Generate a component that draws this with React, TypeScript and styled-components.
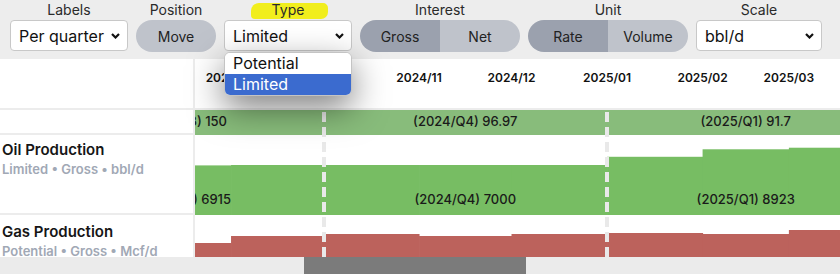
import React from 'react';
import styled, { createGlobalStyle, css } from 'styled-components';

const GlobalStyle = createGlobalStyle`
  html, body { margin: 0; padding: 0; background: #fff; }
  body { font-family: Inter, "Noto Sans", Arial, sans-serif; color: #1f1f1f; }
  * { box-sizing: border-box; }
`;

// time scale: px per day, Oct 1 2024 sits at this x inside a track
const DAY_PX = 3.082;
const ORIGIN_X = 128.5;
const TRACK_W = 645;

const dayIndex = (y: number, m: number) =>
  (Date.UTC(y, m, 1) - Date.UTC(2024, 9, 1)) / 86400000;
const xAt = (y: number, m: number) => ORIGIN_X + dayIndex(y, m) * DAY_PX;

const months = [
  [2024, 6], [2024, 7], [2024, 8], [2024, 9], [2024, 10],
  [2024, 11], [2025, 0], [2025, 1], [2025, 2],
];
const nextMonth = (y: number, m: number) => (m === 11 ? [y + 1, 0] : [y, m + 1]);

const quarters = [
  { from: [2024, 6], to: [2024, 9], name: '2024/Q3', band: '150', oil: '6915' },
  { from: [2024, 9], to: [2025, 0], name: '2024/Q4', band: '96.97', oil: '7000' },
  { from: [2025, 0], to: [2025, 3], name: '2025/Q1', band: '91.7', oil: '8923' },
];

const oilValues = [6800, 6945, 7000, 7000, 7000, 7000, 8150, 9200, 9420];
const gasValues = [0, 1400, 2100, 2300, 2100, 2300, 2400, 2300, 2700];

const Page = styled.div`
  width: 840px;
  height: 274px;
  overflow: hidden;
`;

const Toolbar = styled.div`
  display: flex;
  align-items: flex-start;
  gap: 8px;
  height: 59px;
  padding: 0 10px;
  background: #ededed;
  position: relative;
  z-index: 5;
`;

const Field = styled.div`
  display: flex;
  flex-direction: column;
  align-items: center;
  position: relative;
`;

const FieldLabel = styled.span<{ $marked?: boolean }>`
  position: relative;
  z-index: 0;
  height: 20px;
  font-size: 14px;
  line-height: 20px;
  color: #2a2a2a;
  ${p =>
    p.$marked &&
    css`
      &::before {
        content: '';
        position: absolute;
        left: -21px;
        right: -24px;
        top: 3px;
        bottom: 1px;
        background: #f1ee1d;
        border-radius: 8px 5px 7px 4px;
        z-index: -1;
      }
    `}
`;

const SelectBox = styled.div<{ $width: number }>`
  width: ${p => p.$width}px;
  height: 31px;
  display: flex;
  align-items: center;
  justify-content: space-between;
  padding: 0 7px 0 8px;
  background: #fff;
  border: 1px solid #c8c8c8;
  border-radius: 4px;
  font-size: 16px;
  color: #111;
`;

const PillButton = styled.button`
  width: 80px;
  height: 32px;
  padding: 0;
  border: none;
  border-radius: 16px;
  background: #bfc3cb;
  font: inherit;
  font-size: 14px;
  color: #222;
`;

const Toggle = styled.div`
  display: flex;
  width: 160px;
  height: 32px;
  border-radius: 16px;
  overflow: hidden;
`;

const ToggleOption = styled.button<{ $active?: boolean }>`
  flex: 1;
  padding: 0;
  border: none;
  font: inherit;
  font-size: 14px;
  color: #222;
  background: ${p => (p.$active ? '#9ba1ae' : '#bfc3cb')};
`;

const Dropdown = styled.ul`
  position: absolute;
  top: 52px;
  left: 0;
  width: 100%;
  margin: 0;
  padding: 0;
  list-style: none;
  background: #fff;
  border: 1px solid #c4c4c4;
  border-radius: 6px;
  overflow: hidden;
  box-shadow: 0 12px 34px rgba(0, 0, 0, 0.5);
`;

const Option = styled.li<{ $selected?: boolean }>`
  height: 21px;
  line-height: 21px;
  padding-left: 8px;
  font-size: 16px;
  background: ${p => (p.$selected ? '#3b6bcf' : '#fff')};
  color: ${p => (p.$selected ? '#fff' : '#111')};
`;

const Chart = styled.div`
  display: grid;
  grid-template-columns: 195px ${TRACK_W}px;
  grid-template-rows: 51px 25px 80px 42px 17px;
`;

const SideCell = styled.div<{ $row: number; $last?: boolean; $top?: number }>`
  grid-column: 1;
  grid-row: ${p => p.$row};
  border-right: 2px solid #ececec;
  border-bottom: ${p => (p.$last ? 'none' : '2px solid #ececec')};
  padding: ${p => p.$top ?? 6}px 0 0 2px;
`;

const SeriesTitle = styled.div`
  font-size: 15px;
  line-height: 18px;
  font-weight: 600;
  color: #161616;
`;

const SeriesMeta = styled.div`
  margin-top: 2px;
  font-size: 13px;
  line-height: 16px;
  font-weight: 600;
  color: #a1a8b5;
`;

const HeaderTrack = styled.div`
  grid-column: 2;
  grid-row: 1;
  position: relative;
  border-bottom: 2px solid #ececec;
  overflow: hidden;
`;

const MonthLabel = styled.span`
  position: absolute;
  top: 12px;
  transform: translateX(-50%);
  font-size: 12px;
  line-height: 14px;
  font-weight: 600;
  color: #111;
  white-space: nowrap;
`;

const Track = styled.div<{ $row: number }>`
  grid-column: 2;
  grid-row: ${p => p.$row};
  svg {
    display: block;
  }
  text {
    font-family: Inter, "Noto Sans", Arial, sans-serif;
    font-size: 13px;
    font-weight: 500;
    fill: #1a1a1a;
  }
`;

const Markers = styled.div`
  grid-column: 2;
  grid-row: 2 / 5;
  position: relative;
  pointer-events: none;
`;

const Marker = styled.div`
  position: absolute;
  top: 2px;
  bottom: 0;
  width: 4px;
  background: repeating-linear-gradient(to bottom, #e9e9e9 0 10px, transparent 10px 15px);
`;

const ScrollTrack = styled.div`
  grid-column: 1 / 3;
  grid-row: 5;
  background: #ebebeb;
  display: flex;
`;

const ScrollThumb = styled.div<{ $offset: number; $size: number }>`
  margin-left: ${p => p.$offset}px;
  width: ${p => p.$size}px;
  background: #7b7b7b;
`;

const Chevron = () => (
  <svg width="9" height="6" viewBox="0 0 9 6">
    <path d="M1 1 L4.5 4.5 L8 1" fill="none" stroke="#111" strokeWidth="2.2" />
  </svg>
);

const Select = ({ value, width }: { value: string; width: number }) => (
  <SelectBox $width={width}>
    <span>{value}</span>
    <Chevron />
  </SelectBox>
);

const quarterCenter = (q: typeof quarters[number]) =>
  (xAt(q.from[0], q.from[1]) + xAt(q.to[0], q.to[1])) / 2;

const Bars = ({ values, height, scale, color }: { values: number[]; height: number; scale: number; color: string }) => (
  <>
    {months.map(([y, m], i) => {
      const [ny, nm] = nextMonth(y, m);
      const x1 = xAt(y, m);
      const x2 = xAt(ny, nm);
      const h = values[i] * scale;
      return <rect key={i} x={x1} y={height - h} width={x2 - x1 + 0.5} height={h} fill={color} />;
    })}
  </>
);

const headerMonths = [[2024, 8], [2024, 9], [2024, 10], [2024, 11], [2025, 0], [2025, 1], [2025, 2]];

const App = () => {
  return (
    <Page>
      <GlobalStyle />
      <Toolbar>
        <Field>
          <FieldLabel>Labels</FieldLabel>
          <Select value="Per quarter" width={118} />
        </Field>
        <Field>
          <FieldLabel>Position</FieldLabel>
          <PillButton>Move</PillButton>
        </Field>
        <Field>
          <FieldLabel $marked>Type</FieldLabel>
          <Select value="Limited" width={128} />
          <Dropdown>
            <Option>Potential</Option>
            <Option $selected>Limited</Option>
          </Dropdown>
        </Field>
        <Field>
          <FieldLabel>Interest</FieldLabel>
          <Toggle>
            <ToggleOption $active>Gross</ToggleOption>
            <ToggleOption>Net</ToggleOption>
          </Toggle>
        </Field>
        <Field>
          <FieldLabel>Unit</FieldLabel>
          <Toggle>
            <ToggleOption $active>Rate</ToggleOption>
            <ToggleOption>Volume</ToggleOption>
          </Toggle>
        </Field>
        <Field>
          <FieldLabel>Scale</FieldLabel>
          <Select value="bbl/d" width={126} />
        </Field>
      </Toolbar>

      <Chart>
        <SideCell $row={1} />
        <HeaderTrack>
          {headerMonths.map(([y, m]) => (
            <MonthLabel key={`${y}-${m}`} style={{ left: xAt(y, m) }}>
              {`${y}/${String(m + 1).padStart(2, '0')}`}
            </MonthLabel>
          ))}
        </HeaderTrack>

        <SideCell $row={2} />
        <Track $row={2}>
          <svg width={TRACK_W} height={25}>
            <rect x={0} y={0} width={TRACK_W} height={25} fill="#88bc7b" />
            {quarters.map(q => (
              <text key={q.name} x={quarterCenter(q)} y={16} textAnchor="middle">
                ({q.name}) {q.band}
              </text>
            ))}
          </svg>
        </Track>

        <SideCell $row={3}>
          <SeriesTitle>Oil Production</SeriesTitle>
          <SeriesMeta>Limited • Gross • bbl/d</SeriesMeta>
        </SideCell>
        <Track $row={3}>
          <svg width={TRACK_W} height={80}>
            <Bars values={oilValues} height={80} scale={1 / 140} color="#77bd63" />
            {quarters.map(q => (
              <text key={q.name} x={quarterCenter(q)} y={69} textAnchor="middle">
                ({q.name}) {q.oil}
              </text>
            ))}
          </svg>
        </Track>

        <SideCell $row={4} $last $top={8}>
          <SeriesTitle>Gas Production</SeriesTitle>
          <SeriesMeta>Potential • Gross • Mcf/d</SeriesMeta>
        </SideCell>
        <Track $row={4}>
          <svg width={TRACK_W} height={42}>
            <Bars values={gasValues} height={42} scale={1 / 100} color="#bc625c" />
          </svg>
        </Track>

        <Markers>
          <Marker style={{ left: xAt(2024, 9) - 2 }} />
          <Marker style={{ left: xAt(2025, 0) - 2 }} />
        </Markers>

        <ScrollTrack>
          <ScrollThumb $offset={304} $size={222} />
        </ScrollTrack>
      </Chart>
    </Page>
  );
};

export default App;
